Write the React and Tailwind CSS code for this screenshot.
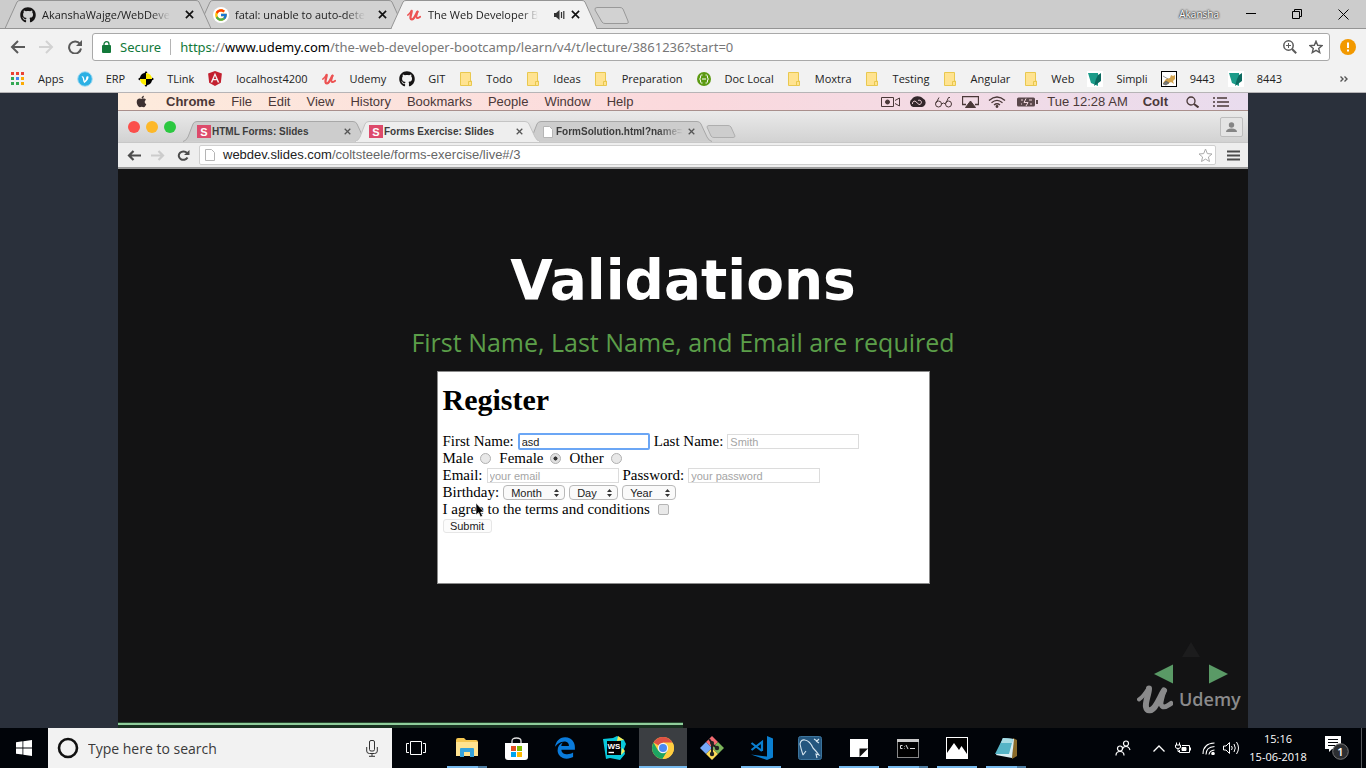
import React from "react";
import { FaGithub, FaApple, FaAngular } from "react-icons/fa";
import { FcGoogle } from "react-icons/fc";

const ui = "font-['Open_Sans',sans-serif]";
const mac = "font-['Liberation_Sans',Arial,sans-serif]";

/* ---------- shared drawings ---------- */

function UdemyMark({ className }) {
  return (
    <svg viewBox="0 0 36 30" className={className} fill="none" stroke="currentColor" strokeLinecap="round" strokeLinejoin="round">
      <path d="M2 15.500C6 13 8.500 9 11 5" strokeWidth="4" />
      <path d="M12 4.500C12 10 8 18 9 23C10 28 15 27 18 22.500C22 17 24 11 27 6.500" strokeWidth="6" />
      <path d="M27 6.500C25 13 22.500 21 25.500 22.500C28 24 31 21.500 34 19.500" strokeWidth="5" />
    </svg>
  );
}

function Cross({ className }) {
  return (
    <svg viewBox="0 0 10 10" className={className} fill="none" stroke="currentColor">
      <path d="M1 1L9 9M9 1L1 9" strokeWidth="1.800" />
    </svg>
  );
}

function Speaker() {
  return (
    <svg viewBox="0 0 11 10" className="h-[10px] w-[11px] shrink-0" fill="#333">
      <path d="M0 3H2L5.500 0V10L2 7H0Z" />
      <path d="M7.500 2V8M9.800 1V9" stroke="#333" strokeWidth="1.200" />
    </svg>
  );
}

function Folder() {
  return (
    <svg viewBox="0 0 12 14" className="h-[14px] w-3">
      <path d="M.5.500H10.500V9H11.500V13.500H.5Z" fill="#ffe391" stroke="#e9c84f" />
      <path d="M8.500 13V9.500H11" fill="none" stroke="#e9c84f" />
    </svg>
  );
}

function Shield() {
  return (
    <svg viewBox="0 0 16 16" className="size-4">
      <rect width="16" height="16" fill="#fff" />
      <path d="M1 2H11V15L4 12Z" fill="#1c9c8a" />
      <path d="M11 4L14 2V10L7 15L9 8Z" fill="#0c6a60" />
    </svg>
  );
}

/* ---------- outer browser ---------- */

function BrowserTab({ icon, title, active, audio, className }) {
  return (
    <div className={`relative flex h-[29px] w-[206px] shrink-0 items-center pr-[17px] pl-[15px] ${className}`}>
      <svg viewBox="0 0 206 29" className="absolute inset-0 h-[29px] w-[206px]">
        <path d="M0 28.500L12 2Q13 .5 15 .5H191Q193 .5 194 2L206 28.500" fill={active ? "#f2f2f2" : "#d2d2d2"} stroke="#949494" />
        {active ? <path d="M1 28.500H205" stroke="#f2f2f2" /> : <path d="M0 28.500H206" stroke="#949494" />}
      </svg>
      <span className="relative flex size-4 shrink-0 items-center justify-center">{icon}</span>
      <span className="relative ml-[6px] flex min-w-0 flex-1 text-[11px] leading-4 whitespace-nowrap text-[#222]">
        <span className="mask-[linear-gradient(to_right,black_85%,transparent)]">{title}</span>
      </span>
      {audio && <span className="relative ml-2"><Speaker /></span>}
      <button aria-label="Close tab" className={`relative flex size-[10px] items-center justify-center text-[#111] ${audio ? "ml-[5px]" : "ml-[9px]"}`}>
        <Cross className="size-[9px]" />
      </button>
    </div>
  );
}

function TabStrip() {
  return (
    <header className="flex h-[29px] items-start overflow-hidden bg-[#cccccc] pl-[5px] shadow-[inset_0_-1px_0_#949494]">
      <BrowserTab className="z-20" icon={<FaGithub className="size-4 text-[#161414]" />} title="AkanshaWajge/WebDeve" />
      <BrowserTab
        className="z-10 -ml-[13px]"
        icon={<span className="flex size-4 items-center justify-center rounded-full bg-white"><FcGoogle className="size-[14px]" /></span>}
        title="fatal: unable to auto-dete"
      />
      <BrowserTab className="z-30 -ml-[13px]" active audio icon={<UdemyMark className="h-3 w-[14px] text-[#ec5252]" />} title="The Web Developer B" />
      <button aria-label="New tab" className="mt-[7px] -ml-[3px]">
        <svg viewBox="0 0 36 17" className="h-[17px] w-9">
          <path d="M3 .5H26Q28 .5 29 2L34 14Q35 16.500 33 16.500H11Q9 16.500 8 15L1 3Q.5.500 3 .5Z" fill="#d2d2d2" stroke="#999" />
        </svg>
      </button>
      <div className="ml-auto flex h-7 items-center text-black">
        <span className="mr-[9px] text-[10px] text-white [text-shadow:0_0_2px_#000,0_0_2px_#333]">Akansha</span>
        <button aria-label="Minimize" className="flex w-[46px] justify-center">
          <svg viewBox="0 0 10 10" className="size-[10px]"><path d="M0 4.500H10" stroke="#000" /></svg>
        </button>
        <button aria-label="Restore" className="flex w-[46px] justify-center">
          <svg viewBox="0 0 10 10" className="size-[10px]" fill="none" stroke="#000"><path d="M.5 2.500H7.500V9.500H.5ZM2.500 2V.5H9.500V7.500H8" /></svg>
        </button>
        <button aria-label="Close" className="flex w-[46px] justify-center">
          <svg viewBox="0 0 11 11" className="size-[11px]" stroke="#000"><path d="M.5.500L10.500 10.500M10.500.5L.5 10.500" /></svg>
        </button>
      </div>
    </header>
  );
}

function Toolbar() {
  return (
    <div className="flex h-[36px] items-center bg-[#f2f2f2] pl-[10px]">
      <button aria-label="Back" className="mr-[14px] text-[#5a5a5a]">
        <svg viewBox="0 0 15 14" className="h-[14px] w-[15px]" fill="none" stroke="currentColor" strokeWidth="2"><path d="M15 7H2M8 1L2 7L8 13" /></svg>
      </button>
      <button aria-label="Forward" className="mr-[14px] text-[#d2d2d2]">
        <svg viewBox="0 0 15 14" className="h-[14px] w-[15px]" fill="none" stroke="currentColor" strokeWidth="2"><path d="M0 7H13M7 1L13 7L7 13" /></svg>
      </button>
      <button aria-label="Reload" className="mr-[10px] text-[#5a5a5a]">
        <svg viewBox="0 0 14 14" className="size-[14px]">
          <path d="M12 4A6 6 0 1 0 13 8.500" fill="none" stroke="currentColor" strokeWidth="2" />
          <path d="M14 0V6H8Z" fill="currentColor" />
        </svg>
      </button>
      <div className="flex h-7 min-w-0 flex-1 items-center rounded-[3px] border border-[#a9a9a9] bg-white pr-[6px] pl-[9px] text-[13px] leading-5 whitespace-nowrap font-['Noto_Sans',sans-serif]">
        <svg viewBox="0 0 9 12" className="h-3 w-[9px] shrink-0">
          <rect y="4" width="9" height="8" rx="1" fill="#12793a" />
          <path d="M2 5V3.200A2.500 2.500 0 0 1 7 3.200V5" fill="none" stroke="#12793a" strokeWidth="1.300" />
        </svg>
        <span className="ml-[9px] text-[#12793a]">Secure</span>
        <span className="mx-[9px] h-4 w-px bg-[#b4b4b4]" />
        <span className="min-w-0 flex-1 overflow-hidden text-[#777]">
          <span className="text-[#12793a]">https</span>://<span className="text-black">www.udemy.com</span>/the-web-developer-bootcamp/learn/v4/t/lecture/3861236?start=0
        </span>
        <button aria-label="Zoom" className="mr-3">
          <svg viewBox="0 0 14 14" className="size-[14px]" fill="none" stroke="#5a5a5a">
            <circle cx="5.500" cy="5.500" r="4.700" strokeWidth="1.500" />
            <path d="M9 9L13.200 13.200" strokeWidth="2" />
            <path d="M3 5.500H8M5.500 3V8" />
          </svg>
        </button>
        <button aria-label="Bookmark this page">
          <svg viewBox="0 0 15 15" className="size-[14px]" fill="none" stroke="#5a5a5a" strokeWidth="1.500">
            <path d="M7.500 1.300L9.300 5.600L14 6L10.400 9L11.500 13.500L7.500 11.100L3.500 13.500L4.600 9L1 6L5.700 5.600Z" />
          </svg>
        </button>
      </div>
      <button aria-label="Update" className="mr-[10px] ml-[10px]">
        <svg viewBox="0 0 16 16" className="size-4">
          <circle cx="8" cy="8" r="8" fill="#f29900" />
          <path d="M8 3.500V9M8 10.500V12.500" stroke="#fff" strokeWidth="2" />
        </svg>
      </button>
    </div>
  );
}

const bookmarks = [
  {
    label: "Apps",
    icon: (
      <svg viewBox="0 0 13 13" className="size-[13px]">
        <path d="M0 0H3V3H0ZM5 0H8V3H5ZM10 0H13V3H10Z" fill="#ea4335" />
        <path d="M0 5H3V8H0ZM0 10H3V13H0Z" fill="#34a853" />
        <path d="M5 5H8V8H5Z" fill="#4285f4" />
        <path d="M10 5H13V8H10ZM10 10H13V13H10Z" fill="#fbab05" />
        <path d="M5 10H8V13H5Z" fill="#34a853" />
      </svg>
    ),
  },
  {
    label: "ERP",
    icon: (
      <svg viewBox="0 0 16 16" className="size-4">
        <circle cx="8" cy="8" r="7.300" fill="#2bb0e4" stroke="#a8dcf2" />
        <path d="M4.500 5.500Q6.500 4.500 7 7L7.700 10Q9.500 8 9.200 6.500Q9.500 4.500 11.500 5.500Q12 8.500 7.500 12Q6.300 11.500 5.700 7Z" fill="#fff" />
      </svg>
    ),
  },
  {
    label: "TLink",
    icon: (
      <svg viewBox="0 0 16 16" className="size-4">
        <path d="M8 2A6 6 0 0 1 14 8H8ZM8 14A6 6 0 0 1 2 8H8Z" fill="#ffee00" />
        <path d="M8 0V8H0L2 6.500A6 6 0 0 1 6.500 2ZM8 16V8H16L14 9.500A6 6 0 0 1 9.500 14Z" fill="#000" />
        <path d="M8 0L9.500 2H8ZM0 8L2 9.500V8ZM16 8L14 6.500V8ZM8 16L6.500 14H8Z" fill="#000" />
      </svg>
    ),
  },
  { label: "localhost4200", icon: <FaAngular className="size-[17px] text-[#c3202f]" /> },
  { label: "Udemy", icon: <UdemyMark className="h-3 w-[14px] text-[#ec5252]" /> },
  { label: "GIT", icon: <FaGithub className="size-4 text-[#161414]" /> },
  { label: "Todo", folder: true },
  { label: "Ideas", folder: true },
  { label: "Preparation", folder: true },
  {
    label: "Doc Local",
    icon: (
      <svg viewBox="0 0 14 14" className="size-[14px]">
        <circle cx="7" cy="7" r="7" fill="#5c9a12" />
        <path d="M5.500 3H4.500Q3.500 3 3.500 5T2.500 7Q3.500 7 3.500 9T4.500 11H5.500M8.500 3H9.500Q10.500 3 10.500 5T11.500 7Q10.500 7 10.500 9T9.500 11H8.500M5 7H9" fill="none" stroke="#fff" />
      </svg>
    ),
  },
  { label: "Moxtra", folder: true },
  { label: "Testing", folder: true },
  { label: "Angular", folder: true },
  { label: "Web", folder: true },
  { label: "Simpli", icon: <Shield /> },
  {
    label: "9443",
    icon: (
      <svg viewBox="0 0 16 16" className="size-4">
        <rect x=".5" y=".5" width="15" height="15" fill="#fff" stroke="#000" />
        <path d="M2 12L5 8L9 7L10 4L12 5L14 4V8L12 10L13 13L10 11L6 13Z" fill="#d2a24c" />
        <path d="M2 13L5 10L8 12L5 14ZM2 5L7 8" stroke="#555" fill="#777" strokeWidth=".6" />
      </svg>
    ),
  },
  { label: "8443", icon: <Shield /> },
];

function BookmarksBar() {
  return (
    <nav aria-label="Bookmarks" className="flex h-7 items-center gap-[13px] border-b border-[#b6b4b6] bg-[#f2f2f2] pr-[18px] pl-[9px]">
      {bookmarks.map((b) => (
        <a key={b.label} href="#" className="flex items-center gap-[13px] text-[11px] leading-4 whitespace-nowrap text-[#222]">
          <span className={`flex h-4 items-center justify-center ${b.folder ? "w-[15px]" : "w-4"}`}>{b.folder ? <Folder /> : b.icon}</span>
          {b.label}
        </a>
      ))}
      <button aria-label="More bookmarks" className="ml-auto">
        <svg viewBox="0 0 8 6" className="h-[6px] w-2" fill="none" stroke="#555" strokeWidth="1.400"><path d="M.5.500L3 3L.5 5.500M4.500.5L7 3L4.500 5.500" /></svg>
      </button>
    </nav>
  );
}

/* ---------- recorded desktop ---------- */

function MacMenuBar() {
  return (
    <div className="flex h-[18px] shrink-0 items-center border-b border-[#a98f8c] bg-linear-to-r from-[#fdebdc] via-[#fbd9dd] to-[#e9dcee] pr-[18px] pl-[17px] text-[13px] leading-4 text-[#4a3838]">
      <FaApple className="mr-[18px] size-[13px] text-[#3c3030]" />
      <div className="flex gap-4">
        <span className="font-bold">Chrome</span>
        {["File", "Edit", "View", "History", "Bookmarks", "People", "Window", "Help"].map((m) => (
          <span key={m}>{m}</span>
        ))}
      </div>
      <div className="ml-auto flex items-center">
        <svg viewBox="0 0 19 12" className="h-3 w-[19px]" fill="none" stroke="currentColor"><path d="M.5 1.500H12.500V10.500H.5ZM14 4.500L18.500 2V10L14 7.500" /><circle cx="6.500" cy="6" r="2" fill="currentColor" /></svg>
        <svg viewBox="0 0 18 12" className="ml-2 h-3 w-[18px]"><path d="M5 11A4.500 4.500 0 0 1 4 3A6.500 5.500 0 0 1 15 2.500A4.500 4.500 0 0 1 14 11Z" fill="#33272b" /><path d="M4.500 8A2.500 2.500 0 0 1 7 5L11 8.500A2.200 2.200 0 1 0 10 4.500" fill="none" stroke="#e6c8d0" /></svg>
        <svg viewBox="0 0 17 12" className="ml-[9px] h-3 w-[17px]" fill="none" stroke="currentColor"><circle cx="3.500" cy="8" r="3" /><circle cx="13.500" cy="8" r="3" /><path d="M6.500 8Q8.500 6 10.500 8M1 7L4 1.500M11 7L13.500 1.500H15" /></svg>
        <svg viewBox="0 0 17 12" className="ml-[10px] h-3 w-[17px]" fill="none" stroke="currentColor"><path d="M4 8.500H.5V.5H16.500V8.500H13" strokeWidth="1.300" /><path d="M8.500 5L13.500 11.500H3.500Z" fill="currentColor" /></svg>
        <svg viewBox="0 0 18 12" className="ml-[9px] h-3 w-[18px]" fill="none" stroke="currentColor" strokeWidth="1.300"><path d="M1 4.500Q9-2.500 17 4.500M3.500 6.800Q9 2 14.500 6.800M6 9Q9 6.500 12 9" /><circle cx="9" cy="10.500" r=".8" fill="currentColor" /></svg>
        <svg viewBox="0 0 21 12" className="ml-[11px] h-3 w-[21px]"><rect y="1.500" width="18" height="9" rx="1.500" fill="#5a474b" /><path d="M19 4H21V8H19Z" fill="#5a474b" /><path d="M9 2.500L7 6.500H11L9 10M4 4H6M4 8H5M12 4H15M13 8H15" stroke="#f0d5dc" fill="none" /></svg>
        <span className="ml-[9px]">Tue 12:28 AM</span>
        <span className="ml-[15px] font-bold">Colt</span>
        <svg viewBox="0 0 13 12" className="ml-[18px] h-3 w-[13px]" fill="none" stroke="currentColor"><circle cx="5" cy="5" r="4" strokeWidth="1.300" /><path d="M8 8L12.500 11.500" strokeWidth="2" /></svg>
        <svg viewBox="0 0 17 12" className="ml-[14px] h-3 w-[17px]" stroke="currentColor" strokeWidth="1.600"><path d="M0 2H2M4 2H14M0 6H2M4 6H16M0 10H2M4 10H16" /></svg>
      </div>
    </div>
  );
}

function SlidesIcon() {
  return (
    <span className="flex h-[13px] w-[14px] shrink-0 items-center justify-center bg-[#dd4a6b] text-[11px] leading-3 font-bold text-white">S</span>
  );
}

function PageIcon() {
  return (
    <svg viewBox="0 0 10 12" className="h-3 w-[10px] shrink-0"><path d="M.5.500H6.500L9.500 3.500V11.500H.5Z" fill="#fff" stroke="#b5b5b5" /></svg>
  );
}

function MacTab({ icon, title, active, fade, className }) {
  return (
    <div className={`relative flex h-[21px] w-[185px] shrink-0 items-center pr-[17px] pl-[14px] ${className}`}>
      <svg viewBox="0 0 185 21" className="absolute inset-0 h-[21px] w-[185px]">
        <path d="M0 20.500Q3 20 5 16L10 3Q11 .5 14 .5H170Q173 .5 174 3L180 16Q182 20 185 20.500" fill={active ? "#eeeeee" : "#cdcdcd"} stroke={active ? "#c4c4c4" : "#a8a8a8"} />
        {active && <path d="M1 20.500H184" stroke="#eee" />}
      </svg>
      <span className="relative flex w-[14px] shrink-0 justify-center">{icon}</span>
      <span className="relative ml-[1px] flex min-w-0 flex-1 text-[10px] leading-3 font-bold whitespace-nowrap text-[#3c3c3c]">
        <span className={fade ? "mask-[linear-gradient(to_right,black_80%,transparent)]" : ""}>{title}</span>
      </span>
      <span className="relative ml-[7px] flex text-[#555]"><Cross className="size-[7px]" /></span>
    </div>
  );
}

function MacBrowser() {
  return (
    <div className="shrink-0">
      <div className="flex h-8 items-end border-b border-[#c8c8c8] bg-linear-to-b from-[#eaeaea] to-[#d2d2d2] pl-[10px]">
        <div className="flex gap-[6px] self-center">
          <span className="size-3 rounded-full bg-[#fb4f4b]" />
          <span className="size-3 rounded-full bg-[#fdb829]" />
          <span className="size-3 rounded-full bg-[#2bc840]" />
        </div>
        <MacTab className="z-10 ml-[7px]" icon={<SlidesIcon />} title="HTML Forms: Slides" />
        <MacTab className="z-20 -ml-[13px]" active icon={<SlidesIcon />} title="Forms Exercise: Slides" />
        <MacTab className="z-10 -ml-[13px]" icon={<PageIcon />} title="FormSolution.html?name=" fade />
        <svg viewBox="0 0 30 13" className="mb-1 -ml-[6px] h-[13px] w-[30px]"><path d="M3 .5H22Q24 .5 25 2L29 11Q29 12.500 27 12.500H8Q6 12.500 5 11L1 2Q1 .5 3 .5Z" fill="#cdcdcd" stroke="#aeaeae" /></svg>
        <span className="mr-[5px] mb-[5px] ml-auto flex h-5 w-[23px] items-center justify-center rounded-[2px] border border-[#bdbdbd] bg-[#e4e4e4]">
          <svg viewBox="0 0 11 10" className="h-[10px] w-[11px]" fill="#858585"><circle cx="5.500" cy="3" r="2.700" /><path d="M0 10Q0 6.500 5.500 6.500T11 10Z" /></svg>
        </span>
      </div>
      <div className="flex h-[26px] items-center border-b-2 border-[#9a9a9a] bg-[#eeeeee] pr-2 pl-[9px]">
        <svg viewBox="0 0 14 11" className="h-[11px] w-[14px]" fill="none" stroke="#4c4c4c" strokeWidth="2.200"><path d="M14 5.500H2M6.500 1L2 5.500L6.500 10" /></svg>
        <svg viewBox="0 0 14 11" className="ml-[10px] h-[11px] w-[14px]" fill="none" stroke="#cccccc" strokeWidth="2.200"><path d="M0 5.500H12M7.500 1L12 5.500L7.500 10" /></svg>
        <svg viewBox="0 0 13 11" className="ml-3 h-[11px] w-[13px]"><path d="M10 3A4.600 4.200 0 1 0 10.500 7.500" fill="none" stroke="#4c4c4c" strokeWidth="2" /><path d="M12.500 0V5H7Z" fill="#4c4c4c" /></svg>
        <div className="ml-[9px] flex h-5 flex-1 items-center rounded-[2px] border border-[#cfcfcf] bg-white pr-[2px] pl-[5px] text-[13px] leading-4 text-[#666]">
          <PageIcon />
          <span className="ml-2 flex-1 whitespace-nowrap"><span className="text-[#222]">webdev.slides.com</span>/coltsteele/forms-exercise/live#/3</span>
          <svg viewBox="0 0 15 15" className="size-[15px]" fill="none" stroke="#aaa"><path d="M7.500 1L9.300 5.600L14 6L10.400 9L11.500 13.500L7.500 11.100L3.500 13.500L4.600 9L1 6L5.700 5.600Z" /></svg>
        </div>
        <svg viewBox="0 0 13 11" className="ml-[11px] h-[11px] w-[13px]" stroke="#4a4a4a" strokeWidth="2"><path d="M0 1.500H13M0 5.500H13M0 9.500H13" /></svg>
      </div>
    </div>
  );
}

function Picker({ id, label, className }) {
  return (
    <span className="relative mr-1 flex">
      <select id={id} aria-label={label} className={`h-[15px] appearance-none rounded-[4px] border border-[#b9b9b9] bg-[#fafafa] pl-[7px] text-[11px] leading-3 text-[#222] ${className} ${mac}`}>
        <option>{label}</option>
      </select>
      <svg viewBox="0 0 5 8" className="pointer-events-none absolute top-[4px] right-[6px] h-2 w-[5px]" fill="#333"><path d="M2.500 0L5 3H0ZM2.500 8L0 5H5Z" /></svg>
    </span>
  );
}

const fieldBase = `w-[132px] bg-white px-[2px] text-[11px] leading-3 text-[#222] placeholder:text-[#a5a5a5] outline-none ${mac}`;
const field = `h-[15px] border border-[#dcdcdc] ${fieldBase}`;
const focusedField = `h-[17px] rounded-[2px] border-2 border-[#6ba6f5] ${fieldBase}`;
const radio = "mr-2 ml-[7px] size-[11px] appearance-none rounded-full border border-[#b0b0b0] bg-[#e8e8e8] checked:bg-[radial-gradient(circle,#333_28%,#e0e0e0_36%)]";

function RegisterForm() {
  return (
    <form onSubmit={(e) => e.preventDefault()} className="relative mt-[13px] h-[213px] w-[493px] border border-[#8b8b8b] bg-white px-[5px] pt-[10px] text-[15px] leading-[17px] text-black font-['Liberation_Serif','Times_New_Roman',serif]">
      <h2 className="text-[30px] leading-9 font-bold">Register</h2>
      <div className="mt-[15px] flex h-[17px] items-center whitespace-nowrap">
        <label htmlFor="first">First Name:</label>
        <input id="first" defaultValue="asd" className={`mr-1 ml-1 ${focusedField}`} />
        <label htmlFor="last">Last Name:</label>
        <input id="last" placeholder="Smith" className={`ml-1 ${field}`} />
      </div>
      <div className="flex h-[17px] items-center">
        <label htmlFor="male">Male</label>
        <input id="male" type="radio" name="gender" className={radio} />
        <label htmlFor="female">Female</label>
        <input id="female" type="radio" name="gender" defaultChecked className={radio} />
        <label htmlFor="other">Other</label>
        <input id="other" type="radio" name="gender" className={radio} />
      </div>
      <div className="flex h-[17px] items-center whitespace-nowrap">
        <label htmlFor="email">Email:</label>
        <input id="email" placeholder="your email" className={`mr-1 ml-1 ${field}`} />
        <label htmlFor="password">Password:</label>
        <input id="password" type="password" placeholder="your password" className={`ml-1 ${field}`} />
      </div>
      <div className="flex h-[17px] items-center">
        <label htmlFor="month" className="mr-1">Birthday:</label>
        <Picker id="month" label="Month" className="w-[62px]" />
        <Picker id="day" label="Day" className="w-[49px]" />
        <Picker id="year" label="Year" className="w-[54px]" />
      </div>
      <div className="flex h-[17px] items-center">
        <label htmlFor="terms">I agree to the terms and conditions</label>
        <input id="terms" type="checkbox" className="ml-2 size-[11px] appearance-none rounded-[2px] border border-[#b5b5b5] bg-[#e9e9e9]" />
      </div>
      <button type="submit" className={`mt-px flex h-[14px] w-[49px] items-center justify-center rounded-[3px] border border-[#e6e6e6] bg-[#fcfcfc] text-[11px] leading-3 text-[#222] ${mac}`}>Submit</button>
      <svg viewBox="0 0 10 15" className="absolute top-[131px] left-[37px] h-[15px] w-[10px]"><path d="M1 0V12L3.700 9.500L5.500 14L7.500 13L5.700 9H9Z" fill="#000" stroke="#fff" strokeWidth=".6" /></svg>
    </form>
  );
}

function Slide() {
  return (
    <section className="relative flex flex-1 flex-col items-center bg-[#131314] pt-[75px]">
      <h1 className="font-['DejaVu_Sans',sans-serif] text-[55px] leading-[72px] font-bold text-white">Validations</h1>
      <p className={`mt-[10px] text-[25px] leading-8 whitespace-nowrap text-[#5b9e49] ${ui}`}>First Name, Last Name, and Email are required</p>
      <RegisterForm />
      <div className="absolute right-[8px] bottom-[14px] w-[103px]">
        <svg viewBox="0 0 74 42" className="ml-[17px] h-[42px] w-[74px]">
          <path d="M37 0L46 15H28Z" fill="#1c1c1d" />
          <path d="M0 32L19 22.500V41.500Z" fill="#5a9a66" />
          <path d="M74 32L55 22.500V41.500Z" fill="#5a9a66" />
        </svg>
        <div className="flex items-center text-[#8a8a8b]">
          <UdemyMark className="h-[30px] w-9 shrink-0" />
          <span className={`ml-[6px] text-[18px] leading-7 font-semibold ${ui}`}>Udemy</span>
        </div>
      </div>
      <div className="absolute bottom-0 left-0 h-[6px] w-1/2 border-t border-[#27472f] bg-[#183020]">
        <div className="h-[2px] bg-[#8fce9b]" />
      </div>
    </section>
  );
}

/* ---------- taskbar ---------- */

const apps = [
  {
    name: "File Explorer", run: "multi",
    icon: (
      <svg viewBox="0 0 22 20" className="h-5 w-[22px]"><path d="M0 2Q0 0 2 0H8L10 2H20Q22 2 22 4V18H0Z" fill="#f5c752" /><path d="M0 4H22V18H0Z" fill="#ffe390" /><path d="M4 19V11Q4 10 5 10H17Q18 10 18 11V19H14V14H8V19Z" fill="#35a3dc" /></svg>
    ),
  },
  {
    name: "Store",
    icon: (
      <svg viewBox="0 0 23 23" className="size-[23px]"><path d="M7 6V4Q7 1 11.500 1T16 4V6" fill="none" stroke="#ddd" strokeWidth="1.300" /><path d="M0 6H23V20Q23 23 20 23H3Q0 23 0 20Z" fill="#fff" /><path d="M6 9H11V14H6Z" fill="#e34f24" /><path d="M12 9H17V14H12Z" fill="#7fba00" /><path d="M6 15H11V20H6Z" fill="#00a4ef" /><path d="M12 15H17V20H12Z" fill="#ffb900" /></svg>
    ),
  },
  {
    name: "Edge",
    icon: (
      <svg viewBox="0 0 512 512" className="size-[22px]" fill="#0a7bdb"><path d="M486.286 243.671c0-44.032-7.754-84.465-28.801-122.405C416.498 47.879 343.912 8.001 258.893 8.001 118.962 7.724 40.617 113.214 26.056 227.679c42.429-61.312 117.073-121.376 220.375-124.966 0 0 109.666 0 99.419 104.957H169.997c6.369-37.386 18.554-58.986 34.339-78.926-75.048 34.893-121.850 96.096-120.742 188.315.830 71.448 50.124 144.836 120.743 171.976 83.357 31.847 192.776 7.200 240.132-21.324V363.307c-80.864 56.494-270.871 60.925-272.255-67.572h314.073v-52.064z" /></svg>
    ),
  },
  {
    name: "WebStorm",
    icon: (
      <svg viewBox="0 0 24 24" className="size-6"><path d="M1 3L11 2L15 0L22 4L24 8L22 13L23 18L18 24L8 22L4 23Z" fill="#08c8dc" /><path d="M16 0L22 4L15 5ZM20 12L23 15L19 19Z" fill="#f6ee5a" /><rect x="5" y="5" width="14" height="14" fill="#000" /><path d="M6.500 16.500H12" stroke="#fff" strokeWidth="1.400" /><text x="5.500" y="12.500" fill="#fff" fontSize="8" fontWeight="700" fontFamily="Liberation Sans">WS</text></svg>
    ),
  },
  {
    name: "Chrome", run: "active",
    icon: (
      <svg viewBox="0 0 22 22" className="size-[22px]"><circle cx="11" cy="11" r="11" fill="#ffcd40" /><path d="M11 11L1.500 5.500A11 11 0 0 1 20.500 5.500H11Z" fill="#dd5144" /><path d="M1.500 5.500A11 11 0 0 0 10.500 22L15.800 13.700L6.200 13.700Z" fill="#1da462" /><path d="M11 6H20.800A11 11 0 0 1 10.500 22L16 13Z" fill="#ffcd40" /><circle cx="11" cy="11" r="5.200" fill="#f4f4f4" /><circle cx="11" cy="11" r="4" fill="#4a89f4" /></svg>
    ),
  },
  {
    name: "Git",
    icon: (
      <svg viewBox="0 0 24 24" className="size-6"><path d="M12 0L18 6L12 12L6 6Z" fill="#f36b72" /><path d="M6 6L12 12L6 18L0 12Z" fill="#76a9f9" /><path d="M18 6L24 12L18 18L12 12Z" fill="#7cb55b" /><path d="M12 12L18 18L12 24L6 18Z" fill="#fbdb58" /><path d="M9 3L12 7V19M12 8L17 12" stroke="#222" strokeWidth="2" fill="none" /><circle cx="12" cy="7" r="2" fill="#222" /><circle cx="17" cy="12" r="2.200" fill="#222" /><circle cx="12" cy="18" r="2.200" fill="#222" /></svg>
    ),
  },
  {
    name: "Visual Studio Code", run: "one",
    icon: (
      <svg viewBox="0 0 23 24" className="h-6 w-[23px]"><path d="M17 0L23 2.500V21.500L17 24L1 18.500L17 20.500Z" fill="#0a7fd0" /><path d="M1.500 7L12 15M1.500 14L12 6V15" fill="none" stroke="#0a7fd0" strokeWidth="2.200" /></svg>
    ),
  },
  {
    name: "MySQL Workbench",
    icon: (
      <svg viewBox="0 0 24 24" className="size-6"><rect x=".5" y=".5" width="23" height="23" rx="2" fill="#24567e" stroke="#3b739b" /><path d="M5 19Q3 13 2 8Q3 3 7 4Q12 5 15 12Q18 15 21 19L18 18L19 22M5 19L8 15M16 3L19 5L21 3M18 5L21 7" fill="none" stroke="#d5e5ef" strokeWidth="1.100" /></svg>
    ),
  },
  {
    name: "Sticky Notes", run: "one",
    icon: (
      <svg viewBox="0 0 18 18" className="size-[18px]"><path d="M0 0H18V18H0Z" fill="#fff" /><path d="M9.500 9.500H18L9.500 18Z" fill="#111" /></svg>
    ),
  },
  {
    name: "Command Prompt", run: "multi",
    icon: (
      <svg viewBox="0 0 22 19" className="h-[19px] w-[22px]"><rect x=".5" y=".5" width="21" height="18" fill="#000" stroke="#888" /><path d="M0 0H22V3H0Z" fill="#c9c9c9" /><path d="M5.500 6.500H3.500V9.500H5.500M7.500 7V7.500M7.500 9V9.500M9 6L11 10M13 9.500H18" stroke="#ddd" fill="none" /></svg>
    ),
  },
  {
    name: "Photos", run: "one",
    icon: (
      <svg viewBox="0 0 22 22" className="size-[22px]"><rect x=".5" y=".5" width="21" height="21" fill="#000" stroke="#fff" /><path d="M1 16L8 6L13 13L15.500 9L21 17V21H1Z" fill="#fff" /></svg>
    ),
  },
  {
    name: "Notepad", run: "multi",
    icon: (
      <svg viewBox="0 0 23 22" className="h-[22px] w-[23px]"><path d="M18 1L22 3V19L17 22Z" fill="#8a6a28" /><path d="M8 1L19 2L17 21L1 18Z" fill="#d9eef2" /><path d="M8 1L18 2L14 17L0 17Z" fill="#56b4c6" /><path d="M8 1L18 2L17 6L6 6Z" fill="#a9dce4" /></svg>
    ),
  },
];

function Taskbar() {
  return (
    <footer className={`flex h-10 shrink-0 items-stretch bg-[#010409] text-white ${ui}`}>
      <button aria-label="Start" className="flex w-12 items-center justify-center">
        <svg viewBox="0 0 16 16" className="size-4" fill="#fff"><path d="M0 2.200L6.500 1.300V7.500H0ZM7.300 1.200L16 0V7.500H7.300ZM0 8.400H6.500V14.600L0 13.700ZM7.300 8.400H16V16L7.300 14.800Z" /></svg>
      </button>
      <label className="flex w-[344px] items-center bg-[#f2f2f2] pr-[14px] pl-[9px]">
        <svg viewBox="0 0 22 22" className="size-[22px] shrink-0" fill="none" stroke="#111"><circle cx="11" cy="11" r="9" strokeWidth="2.600" /></svg>
        <input aria-label="Search" placeholder="Type here to search" className="ml-[9px] min-w-0 flex-1 bg-transparent text-[14px] outline-none placeholder:text-[#3a3a3a]" />
        <svg viewBox="0 0 12 17" className="h-[17px] w-3" fill="none" stroke="#333"><rect x="3.500" y=".5" width="5" height="10.500" rx="1.500" /><path d="M.7 7V11Q.7 13.500 3.500 13.500H8.500Q11.300 13.500 11.300 11V7M6 13.500V16M3 16.300H9" /></svg>
      </label>
      <button aria-label="Task View" className="mr-[3px] flex w-12 items-center justify-center">
        <svg viewBox="0 0 20 14" className="h-[14px] w-5" fill="none" stroke="#fff"><path d="M4.500.5H15.500V13.500H4.500ZM3 2.500H.5V11.500H3M17 2.500H19.500V11.500H17" /></svg>
      </button>
      <div className="flex gap-px">
        {apps.map((a) => (
          <button key={a.name} aria-label={a.name} className={`relative flex w-12 items-center justify-center ${a.run === "active" ? "bg-[#3b3e42]" : ""}`}>
            {a.icon}
            {a.run === "active" && <span className="absolute inset-x-0 bottom-0 h-[2px] bg-[#76b9ed]" />}
            {a.run === "one" && <span className="absolute inset-x-1 bottom-0 h-[2px] bg-[#76b9ed]" />}
            {a.run === "multi" && <span className="absolute inset-x-1 bottom-0 h-[2px] border-r-[9px] border-[#4e7da2] bg-[#76b9ed]" />}
          </button>
        ))}
      </div>
      <div className="ml-auto flex items-center">
        <svg viewBox="0 0 16 16" className="size-4" fill="none" stroke="#fff" strokeWidth="1.200"><circle cx="11" cy="3.500" r="2.500" /><path d="M7.500 9Q8 6.500 11 6.500T15 10" /><circle cx="5" cy="8.500" r="2.500" /><path d="M1 15.500Q1 11.500 5 11.500T9 15.500" /></svg>
        <svg viewBox="0 0 12 7" className="ml-[22px] h-[7px] w-3" fill="none" stroke="#fff" strokeWidth="1.300"><path d="M.5 6.500L6 1L11.500 6.500" /></svg>
        <svg viewBox="0 0 16 13" className="ml-[10px] h-[13px] w-4" fill="none" stroke="#fff"><path d="M7 3.500H14.500V10.500H4.500V8M15.500 5.500V8.500M1.500.5V3M4.500.5V3M.5 3H5.500V5Q5.500 6.500 3 6.500T.5 5ZM3 6.500V9.500H4.500" /><path d="M7 5.500H11V8.500H7Z" fill="#fff" /></svg>
        <svg viewBox="0 0 13 13" className="ml-[11px] size-[13px]" fill="none" stroke="#fff" strokeWidth="1.100"><path d="M1 12Q1 1.500 12.500 1M4 12.500Q4 5 12.500 4.500M7 12.500Q7.500 8.500 12.500 8" /><circle cx="11" cy="11.500" r="1.200" fill="#fff" /></svg>
        <svg viewBox="0 0 17 14" className="ml-2 h-[14px] w-[17px]" fill="none" stroke="#fff"><path d="M.5 5H3L6.500 1.500V12.500L3 9H.5ZM8.500 5Q10 7 8.500 9M11 3Q13.500 7 11 11M13.500 1Q17.500 7 13.500 13" /></svg>
        <div className="ml-2 w-[60px] text-center text-[11px] leading-[18px] whitespace-nowrap">
          <div>15:16</div>
          <div>15-06-2018</div>
        </div>
        <button aria-label="Notifications" className="relative ml-[17px] size-6">
          <svg viewBox="0 0 24 24" className="size-6"><path d="M0 0H16V13H7L4 16V13H0Z" fill="#fff" /><path d="M3 3.500H13M3 6.500H13M3 9.500H10" stroke="#010409" /><circle cx="15.500" cy="15.500" r="7.800" fill="#2c2e31" stroke="#777" /><text x="15.500" y="19.500" textAnchor="middle" fill="#fff" fontSize="11" fontWeight="600" fontFamily="Open Sans">1</text></svg>
        </button>
        <span className="mr-1 ml-3 h-10 w-px bg-[#55585c]" />
      </div>
    </footer>
  );
}

export default function App() {
  return (
    <div className={`flex min-h-screen flex-col bg-[#2a303b] ${ui}`}>
      <TabStrip />
      <Toolbar />
      <BookmarksBar />
      <main className="flex flex-1 justify-center">
        <div className={`flex w-full max-w-[1130px] flex-col overflow-hidden ${mac}`}>
          <MacMenuBar />
          <MacBrowser />
          <Slide />
        </div>
      </main>
      <Taskbar />
    </div>
  );
}
